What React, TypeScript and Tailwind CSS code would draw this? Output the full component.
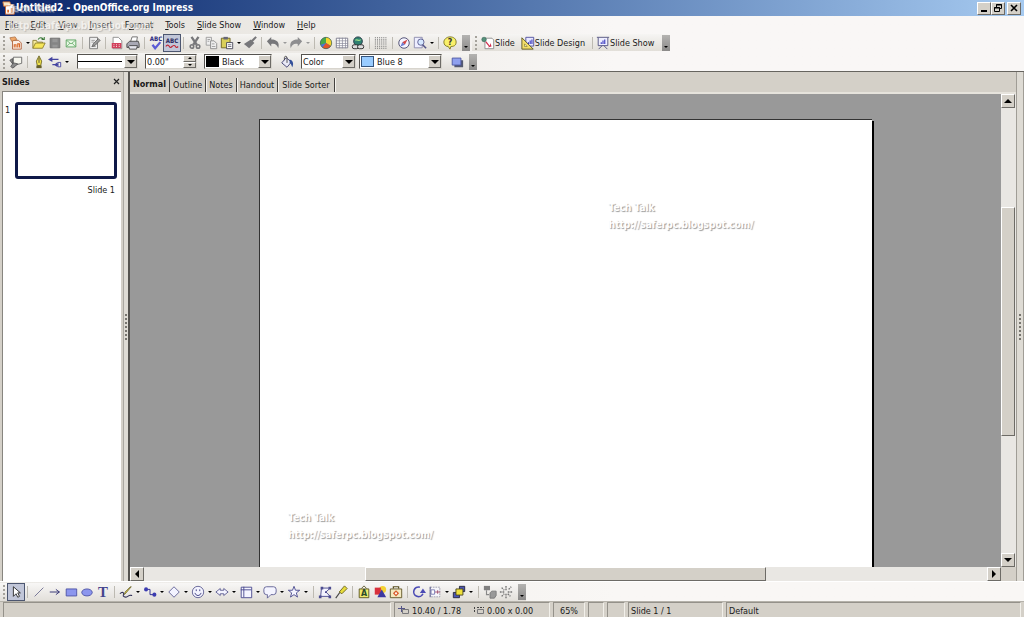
import { useState } from 'react';
import type { ReactNode } from 'react';

const NAVY = '#20208a';
const GRAY = '#77777a';

// 16x16 toolbar drawings
const icons: Record<string, ReactNode> = {
  newDoc: (
    <>
      <path d="M4 5h7l3 3v7H4z" fill="#fbeee4" stroke="#b0603a" />
      <path d="M1 2l6-1 2 3-6 2z" fill="#f0a868" stroke="#a8683c" strokeWidth=".8" />
      <path d="M6 13v-3h2v3M10 13V9h2v4" stroke="#d9692a" strokeWidth="1.300" fill="none" />
    </>
  ),
  open: (
    <>
      <path d="M1 14V5h4l1 2h6v2" fill="#f5eaa0" stroke="#8a7c2c" />
      <path d="M1 14l3-6h11l-3 6z" fill="#f6e65a" stroke="#8a7c2c" />
      <path d="M7 4c2-3 5-2 6 0m-2 0h3V1" stroke="#3c7a3a" fill="none" strokeWidth="1.200" />
    </>
  ),
  save: (
    <>
      <path d="M2.500 2.500h11v11h-11z" fill="#858585" stroke="#6d6d6d" />
      <path d="M5 3h6v4H5zM5 10h6v3H5z" fill="#979797" />
    </>
  ),
  mail: (
    <>
      <path d="M2.500 4.500h11v8h-11z" fill="#e8f7e4" stroke="#55a05a" />
      <path d="M3 5l5 4 5-4M3 12l4-4M13 12L9 8" stroke="#55a05a" fill="none" strokeWidth=".8" />
    </>
  ),
  edit: (
    <>
      <path d="M3 1.500h9v13H3z" fill="#eee" stroke="#777" />
      <path d="M5 5h4M5 7h3M5 12h5" stroke="#999" />
      <path d="M15 5l-6 6-3 1 1-3 6-6z" fill="#999" stroke="#555" strokeWidth=".8" />
    </>
  ),
  pdf: (
    <>
      <path d="M3.500 1.500h6l4 4v9h-10z" fill="#fff" stroke="#888" />
      <path d="M2 8h11v6H2z" fill="#d2405c" />
      <path d="M4 10h1M7 10h1M10 10h1M4 12h1M7 12h1M10 12h1" stroke="#fff" />
    </>
  ),
  print: (
    <>
      <path d="M5 7l2-6h6l-1 6" fill="#fff" stroke="#666" />
      <path d="M1 9l3-3h10l1 3v4H1z" fill="#a8a8b4" stroke="#444" />
      <path d="M3 12l1 3h8l1-4H4z" fill="#e4e4ec" stroke="#444" />
    </>
  ),
  spell: (
    <>
      <text x="8" y="6" fontSize="7" fontWeight="bold" textAnchor="middle" fill="#2b2b80">
        ABC
      </text>
      <path d="M4 10l3 4 6-7" stroke="#5b5bd6" strokeWidth="2.600" fill="none" />
    </>
  ),
  autoSpell: (
    <>
      <text x="8" y="8" fontSize="7" fontWeight="bold" textAnchor="middle" fill="#2b2b60">
        ABC
      </text>
      <path d="M1 12c1-2 3-2 4 0s2 1 3 0 3-2 4 0 2 1 3 0" stroke="#c02838" strokeWidth="1.300" fill="none" />
    </>
  ),
  cut: (
    <>
      <path d="M4 1l6 9M12 1L6 10" stroke={GRAY} strokeWidth="2.600" />
      <circle cx="4.500" cy="12" r="2" fill="none" stroke={GRAY} strokeWidth="1.800" />
      <circle cx="11.500" cy="12" r="2" fill="none" stroke={GRAY} strokeWidth="1.800" />
    </>
  ),
  copy: (
    <>
      <path d="M2.500 1.500h6v9h-6z" fill="#eee" stroke="#999" />
      <path d="M7.500 5.500h4l3 3v6h-7z" fill="#eee" stroke="#888" />
      <path d="M4 4h3M4 6h2M9 9h3M9 12h4" stroke="#999" />
    </>
  ),
  paste: (
    <>
      <path d="M1.500 2.500h10v11h-10z" fill="#d9cf5a" stroke="#6a6020" />
      <path d="M4 1h5v3H4z" fill="#667" />
      <path d="M7.500 7.500h7v7h-7z" fill="#fff" stroke="#445" />
      <path d="M9 10h4M9 12h4" stroke="#667" />
    </>
  ),
  brush: (
    <>
      <path d="M15 1l-5 5" stroke={GRAY} strokeWidth="2.400" />
      <path d="M9 4l4 4-6 6-6-5z" fill={GRAY} />
    </>
  ),
  undo: <path d="M1 6l5-5v3c6 0 10 3 8 10-1-4-4-6-8-5v3z" fill={GRAY} />,
  redo: <path d="M15 6l-5-5v3C4 4 0 7 2 14c1-4 4-6 8-5v3z" fill="#8e8e90" />,
  chart: (
    <>
      <circle cx="8" cy="8" r="6.500" fill="#4a76d8" />
      <path d="M8 8V1.500a6.500 6.500 0 0 1 5.600 9.800z" fill="#f5d52e" />
      <path d="M8 8l5.600 3.300A6.500 6.500 0 0 1 4 13z" fill="#e0562a" />
      <path d="M8 8V1.500a6.500 6.500 0 0 0-6 8.500z" fill="#47a84a" />
      <circle cx="8" cy="8" r="6.500" fill="none" stroke="#3a5a3a" strokeWidth=".7" />
    </>
  ),
  table: (
    <>
      <path d="M1.500 2.500h13v11h-13z" fill="#fff" stroke="#777788" />
      <path d="M1 5.500h14M1 8.500h14M1 11h14M5 2v12M8.500 2v12M12 2v12" stroke="#88889a" strokeWidth=".8" />
    </>
  ),
  link: (
    <>
      <circle cx="8" cy="6" r="5" fill="#2f8070" stroke="#234" />
      <path d="M5 5c2-2 4 2 6-1" stroke="#9be08a" fill="none" strokeWidth="1.400" />
      <rect x="1.500" y="10" width="7" height="4.500" rx="2" fill="#ddd" stroke="#222" />
      <rect x="7.500" y="10" width="7" height="4.500" rx="2" fill="#ddd" stroke="#222" />
    </>
  ),
  grid: (
    <path
      d="M1 2h14M1 4.400h14M1 6.800h14M1 9.200h14M1 11.600h14M1 14h14"
      stroke="#777"
      strokeWidth="1.200"
      strokeDasharray="1.200 1.200"
    />
  ),
  compass: (
    <>
      <circle cx="8" cy="8" r="6" fill="#f4f4ff" stroke="#44446a" />
      <path d="M12 4L9 10 6 7z" fill="#d04848" />
      <path d="M4 12l2-5 3 3z" fill="#6a7ad0" />
    </>
  ),
  zoom: (
    <>
      <path d="M1.500 1.500h9v12h-9z" fill="#eef" stroke="#8888aa" />
      <circle cx="9" cy="7" r="3.600" fill="#d6e8ff" stroke="#555588" />
      <path d="M11 10l4 4" stroke="#555588" strokeWidth="1.800" />
    </>
  ),
  help: (
    <>
      <path d="M8 1c4 0 7 2 7 6s-3 5-6 5l-1 3-2-3c-3 0-5-2-5-5s3-6 7-6z" fill="#f9f06a" stroke="#77711a" />
      <text x="8" y="10.500" fontSize="10" fontWeight="bold" textAnchor="middle" fill="#333">
        ?
      </text>
    </>
  ),
  slide: (
    <>
      <path d="M4.500 2.500h8l2 2v10h-10z" fill="#fff" stroke="#888" />
      <path d="M6 6l4 5 1-3 1 4-4 1 1-1-4-5z" fill="#d03050" />
      <circle cx="3.500" cy="4" r="2.600" fill="#56907a" stroke="#2b5a4a" strokeWidth=".6" />
    </>
  ),
  design: (
    <>
      <path d="M5.500 1.500h9v10h-9z" fill="#e8e8ff" stroke="#4a4a9a" />
      <path d="M8.500 9V7M10.500 9V5M12.500 9V4" stroke="#3c3cc0" strokeWidth="1.300" />
      <path d="M1 2l13 13H1z" fill="#f3df6a" stroke="#555020" />
      <path d="M4 9v3h3z" fill="#fff" stroke="#7a7020" strokeWidth=".7" />
    </>
  ),
  show: (
    <>
      <path d="M1 1.500h14M2.500 2v9h11V2" fill="#eeeeff" stroke="#4a4a7a" />
      <path d="M6 9V7M8 9V5M10 9V4" stroke="#3c3cc0" strokeWidth="1.300" />
      <path d="M7 11l-4 4M9 11l4 4" stroke="#4a4a7a" />
    </>
  ),
  styles: (
    <>
      <path d="M5 2.500h9.500v7L9 11H5z" fill="#f6f6ee" stroke="#666" />
      <path d="M1 6l3-2v6zM2 13l3-4 5 1-3 3-3 2z" fill="#8a8a8a" stroke="#444" strokeWidth=".8" />
    </>
  ),
  pen: (
    <>
      <path d="M8 1l3 6-1 5H6L5 7z" fill="#f1e34b" stroke="#6a6420" />
      <path d="M5 12h6v3H5z" fill="#66602a" />
      <path d="M8 3v6" stroke="#444" />
    </>
  ),
  arrowStyle: (
    <>
      <path d="M3 5h9M5 11h7" stroke="#4444a0" strokeWidth="1.400" />
      <path d="M0 5l5-3v6zM11 8l-4 3 4 3z" fill="#4444a0" />
      <path d="M11.500 8.500h3v5h-3z" fill="#eee" stroke="#4444a0" />
    </>
  ),
  bucket: (
    <>
      <path d="M7 3l6 5-5 6-6-5z" fill="#e9e9f6" stroke="#3c3c6e" />
      <path d="M8 9V3c0-2-3-2-3 0v3" stroke="#444" fill="none" />
      <path d="M11 5c4 1 5 5 3 9-1-2-1-4-3-5z" fill="#34509a" />
    </>
  ),
  shadow: (
    <>
      <path d="M5 6h10v8H5z" fill="#555a70" />
      <path d="M2.500 3.500h10v8h-10z" fill="#8fa0ee" stroke="#4a55a0" />
    </>
  ),
  select: <path d="M5 2v11l3-3 2 4 2-1-2-4h3z" fill="#fff" stroke="#222" />,
  line: <path d="M3 13L13 3" stroke="#6a6a8e" />,
  arrow: <path d="M2 8h11M9 5l4 3-4 3" stroke="#24246a" fill="none" />,
  rect: <path d="M2.500 4.500h12v8h-12z" fill="#8c96ee" stroke="#4a50a4" />,
  ellipse: <ellipse cx="8" cy="8.500" rx="6" ry="4" fill="#8c96ee" stroke="#4a50a4" />,
  text: (
    <text
      x="8"
      y="14"
      fontSize="17"
      fontWeight="bold"
      textAnchor="middle"
      fill="#44448e"
      fontFamily="'Liberation Serif', serif"
    >
      T
    </text>
  ),
  curve: (
    <>
      <path d="M1 10c3-3 5-1 4 1s2 4 5 2 3-1 5-1" stroke="#33335a" strokeWidth="1.200" fill="none" />
      <path d="M14 2l-6 7-2 2 1-3 6-6z" fill="#ecd84a" stroke="#55501f" strokeWidth=".8" />
    </>
  ),
  connector: (
    <>
      <path d="M4 5h4v6h5" stroke={NAVY} fill="none" />
      <circle cx="3.500" cy="5" r="2.300" fill="#3c3cb0" />
      <circle cx="13" cy="11" r="2.300" fill="#3c3cb0" />
    </>
  ),
  diamond: <path d="M8 2l6 6-6 6-6-6z" fill="#f3f3ff" stroke="#5a5a90" />,
  smile: (
    <>
      <circle cx="8" cy="8" r="6.500" fill="#f4f4ff" stroke="#5a5a90" />
      <path d="M6 5v2M10 5v2M4.500 9c1 4 6 4 7 0" stroke="#33337a" fill="none" />
    </>
  ),
  blockArrow: <path d="M1 8l5-4v2h4V4l5 4-5 4v-2H6v2z" fill="#f3f3ff" stroke="#5a5a90" />,
  flow: (
    <>
      <path d="M2.500 2.500h12v12h-12z" fill="#f4f4ff" stroke="#44448a" />
      <path d="M5.500 2v12M2 5.500h12" stroke="#44448a" />
    </>
  ),
  callout: <path d="M4 2h8q3 0 3 3v3q0 3-3 3H9l-4 4v-4H4q-3 0-3-3V5q0-3 3-3z" fill="#f4f4ff" stroke="#5a5a90" />,
  star: <path d="M8 1.500l1.700 4.500h4.800l-3.800 3 1.300 4.800L8 11l-4 2.800L5.300 9 1.500 6h4.800z" fill="#f4f4ff" stroke="#44448a" />,
  points: (
    <>
      <path d="M4 3.500h10L9 8l5 5H3z" fill="#f4f4ff" stroke="#44448a" />
      <path d="M3 2h3v3H3zM12 2h3v3h-3zM8 7h2v2H8zM12 12h3v3h-3zM1 12h3v3H1z" fill="#4c4c90" />
    </>
  ),
  glue: (
    <>
      <path d="M2 15l5-7" stroke="#444" strokeWidth="1.300" />
      <path d="M6 8l6-7 3 3-6 6z" fill="#e8dc3c" stroke="#66601a" />
    </>
  ),
  fontwork: (
    <>
      <path d="M2.500 4.500h11v10h-11z" fill="#f1ea6a" stroke="#555020" />
      <path d="M5 4l3-3 3 3" stroke="#555020" fill="none" />
      <text x="8" y="13" fontSize="10" fontWeight="bold" textAnchor="middle" fill="#2b4a2b">
        A
      </text>
    </>
  ),
  shapes: (
    <>
      <circle cx="11" cy="5" r="4" fill="#f4d232" />
      <path d="M2 3h7v8H2z" fill="#d8303c" />
      <path d="M10 5l5 9H5z" fill="#3c38a0" />
    </>
  ),
  gallery: (
    <>
      <path d="M1.500 4.500h13v10h-13z" fill="#f3e9c0" stroke="#5a5020" />
      <path d="M5 4V2h6v2" stroke="#5a5020" fill="none" strokeWidth="1.400" />
      <path d="M8 6l3.500 3.500L8 13 4.500 9.500z" fill="#d85a2a" />
      <path d="M8 8l1.500 1.500L8 11 6.500 9.500z" fill="#fff" />
    </>
  ),
  rotate: (
    <>
      <path d="M9 2.500A5.500 5.500 0 1 0 12.500 10" stroke="#4a4ab4" strokeWidth="1.800" fill="none" />
      <path d="M9 9h7l-3.500-5z" fill="#4a4ab4" />
    </>
  ),
  align: (
    <>
      <path d="M2.500 2.500h11v11h-11z" fill="#f6f6fa" stroke="#9999aa" strokeDasharray="2 1" />
      <path d="M2.500 2v12" stroke="#55558a" />
      <path d="M3.500 5.500h4v5h-4z" fill="#fff" stroke="#7777b0" />
      <path d="M8 8h6M11 6v4" stroke="#a04a6a" />
    </>
  ),
  arrange: (
    <>
      <path d="M1.500 8.500h7v6h-7zM8.500 1.500h6v6h-6z" fill="#4a55b4" stroke="#223" />
      <path d="M4.500 4.500h8v7h-8z" fill="#efe13c" stroke="#444020" />
    </>
  ),
  extrude: (
    <>
      <path d="M1 1h7v5H1z" fill="#808080" />
      <path d="M4 6v5h3" stroke="#888" fill="none" strokeWidth="1.300" />
      <path d="M8 9l2-2h5v5l-2 3H8z" fill="#999" stroke="#777" />
    </>
  ),
  anim: (
    <path
      d="M8 1v5M8 10v5M1 8h5M10 8h5M3 3l3 3M10 10l3 3M3 13l3-3M11 5l3-3"
      stroke="#777"
      strokeDasharray="2 1"
      strokeWidth="1.600"
    />
  ),
};

function Icon({ name }: { name: string }) {
  return (
    <svg viewBox="0 0 16 16" className="block h-[14px] w-[14px]" aria-hidden="true">
      {icons[name]}
    </svg>
  );
}

function Tool({ name, label, on = false }: { name: string; label: string; on?: boolean }) {
  return (
    <button
      type="button"
      aria-label={label}
      aria-pressed={on}
      className={`flex h-4 w-4 shrink-0 items-center justify-center ${
        on ? 'bg-[#c1c6d8] outline outline-1 outline-[#4c5670]' : ''
      }`}
    >
      <Icon name={name} />
    </button>
  );
}

const Triangle = ({ className = 'fill-black' }: { className?: string }) => (
  <svg viewBox="0 0 8 4" className={`block h-1 w-2 ${className}`} aria-hidden="true">
    <path d="M0 0h8L4 4z" />
  </svg>
);

const Drop = ({ label, wide = false, dim = false }: { label: string; wide?: boolean; dim?: boolean }) => (
  <button
    type="button"
    aria-label={label}
    className={`flex h-4 shrink-0 items-center justify-center ${wide ? 'w-2' : 'w-[7px]'}`}
  >
    <svg viewBox="0 0 4 2" className={`h-[2px] w-1 ${dim ? 'fill-[#999]' : 'fill-black'}`} aria-hidden="true">
      <path d="M0 0h4L2 2z" />
    </svg>
  </button>
);

const Sep = () => (
  <span className="flex w-[7px] shrink-0 justify-center">
    <span className="h-3 w-px bg-[#bdbab2]" />
  </span>
);

const Grip = () => <span className="mx-[3px] h-[14px] w-0 shrink-0 border-l-2 border-dotted border-[#a5a29b]" />;

const More = ({ label }: { label: string }) => (
  <button
    type="button"
    aria-label={label}
    className="flex h-4 w-2 shrink-0 items-end justify-center bg-linear-to-b from-[#b4b3b1] to-[#8b8a89] pb-[3px]"
  >
    <svg viewBox="0 0 4 2" className="h-[2px] w-1" aria-hidden="true">
      <path d="M0 0h4L2 2z" />
    </svg>
  </button>
);

type ComboProps = {
  label: string;
  options: string[];
  className: string;
  children?: ReactNode;
};

function Combo({ label, options, className, children }: ComboProps) {
  return (
    <label
      className={`flex h-[15px] shrink-0 items-center border border-[#d8d5ce] border-t-[#55534f] border-l-[#55534f] bg-white ${className}`}
    >
      {children}
      <select aria-label={label} className="h-full min-w-0 flex-1 appearance-none bg-transparent pl-px leading-3 outline-none">
        {options.map((option) => (
          <option key={option}>{option}</option>
        ))}
      </select>
      <span className="flex h-[13px] w-[13px] shrink-0 items-center justify-center border border-[#6d6b66] border-t-white border-l-white bg-[#d4d0c8]">
        <Triangle />
      </span>
    </label>
  );
}

const menus = [
  ['', 'F', 'ile'],
  ['', 'E', 'dit'],
  ['', 'V', 'iew'],
  ['', 'I', 'nsert'],
  ['F', 'o', 'rmat'],
  ['', 'T', 'ools'],
  ['', 'S', 'lide Show'],
  ['', 'W', 'indow'],
  ['', 'H', 'elp'],
];

const views = ['Normal', 'Outline', 'Notes', 'Handout', 'Slide Sorter'];

const shapeTools = [
  ['curve', 'Curve'],
  ['connector', 'Connector'],
  ['diamond', 'Basic Shapes'],
  ['smile', 'Symbol Shapes'],
  ['blockArrow', 'Block Arrows'],
  ['flow', 'Flowcharts'],
  ['callout', 'Callouts'],
  ['star', 'Stars'],
];

const raised = 'border border-[#6d6b66] border-t-white border-l-white bg-[#d4d0c8]';
const toolRow = 'flex h-[17px] items-center rounded-r-sm bg-linear-to-b from-[#f6f5f3] to-[#e2dfd9]';

function TitleBar() {
  const control = `flex h-[13px] w-[14px] items-center justify-center ${raised}`;
  return (
    <div className="flex h-4 shrink-0 items-center bg-linear-to-r from-[#0a246a] to-[#a6caf0] pr-[3px] pl-[2px] text-white">
      <svg viewBox="0 0 16 16" className="h-[14px] w-[14px]" aria-hidden="true">
        <path d="M4 4h8l2 2v9H4z" fill="#fff" stroke="#c8642c" />
        <path d="M1 1h8l1 4-8 1z" fill="#f4e6c8" stroke="#d87a3a" />
        <path d="M6 13v-3h2v3M10 13V8h2v5" fill="#e0702c" />
      </svg>
      <h1 className="flex-1 truncate text-[10px] leading-4 font-bold">Untitled2 - OpenOffice.org Impress</h1>
      <button type="button" aria-label="Minimize" className={control}>
        <svg viewBox="0 0 10 8" className="h-2 w-[10px]" aria-hidden="true">
          <path d="M2 6h6v2H2z" />
        </svg>
      </button>
      <button type="button" aria-label="Restore" className={`${control} mr-[2px]`}>
        <svg viewBox="0 0 10 8" className="h-2 w-[10px]" fill="none" stroke="#000" aria-hidden="true">
          <path d="M3.500 3V.5h5v4H7M3 1h6M1.500 3.500h5v4h-5zM1 4h6" />
        </svg>
      </button>
      <button type="button" aria-label="Close" className={control}>
        <svg viewBox="0 0 10 8" className="h-2 w-[10px]" stroke="#000" strokeWidth="1.600" aria-hidden="true">
          <path d="M2 1l6 6M8 1L2 7" />
        </svg>
      </button>
    </div>
  );
}

function StandardBar() {
  return (
    <div className="flex h-[19px] items-center">
      <div className={toolRow}>
        <Grip />
        <Tool name="newDoc" label="New" />
        <Drop label="New options" />
        <Tool name="open" label="Open" />
        <Tool name="save" label="Save" />
        <Tool name="mail" label="E-mail" />
        <Sep />
        <Tool name="edit" label="Edit File" />
        <Sep />
        <Tool name="pdf" label="Export as PDF" />
        <Tool name="print" label="Print" />
        <Sep />
        <Tool name="spell" label="Spellcheck" />
        <Tool name="autoSpell" label="AutoSpellcheck" on />
        <Sep />
        <Tool name="cut" label="Cut" />
        <Tool name="copy" label="Copy" />
        <Tool name="paste" label="Paste" />
        <Drop label="Paste options" />
        <Tool name="brush" label="Format Paintbrush" />
        <Sep />
        <Tool name="undo" label="Undo" />
        <Drop label="Undo list" dim />
        <Tool name="redo" label="Redo" />
        <Drop label="Redo list" dim />
        <Sep />
        <Tool name="chart" label="Chart" />
        <Tool name="table" label="Table" />
        <Tool name="link" label="Hyperlink" />
        <Sep />
        <Tool name="grid" label="Display Grid" />
        <Sep />
        <Tool name="compass" label="Navigator" />
        <Tool name="zoom" label="Zoom" />
        <Drop label="Zoom options" />
        <Sep />
        <Tool name="help" label="Help" />
        <span className="w-1" />
        <More label="More standard tools" />
      </div>
      <div className={`${toolRow} ml-[2px]`}>
        <Grip />
        <button type="button" className="ml-px flex items-center">
          <Icon name="slide" />
          Slide
        </button>
        <button type="button" className="ml-[6px] flex items-center">
          <Icon name="design" />
          Slide Design
        </button>
        <span className="w-1" />
        <Sep />
        <button type="button" className="flex items-center">
          <Icon name="show" />
          Slide Show
        </button>
        <span className="w-2" />
        <More label="More presentation tools" />
      </div>
    </div>
  );
}

function LineBar() {
  return (
    <div className="flex h-[19px] items-center">
      <div className={toolRow}>
        <Grip />
        <Tool name="styles" label="Styles and Formatting" />
        <Sep />
        <Tool name="pen" label="Line" />
        <Tool name="arrowStyle" label="Arrow Style" />
        <Drop label="Arrow Style options" />
        <Combo label="Line Style" options={['']} className="ml-[7px] w-[61px]">
          <span className="h-px w-11 bg-black" />
        </Combo>
        <div className="ml-[7px] flex h-[15px] w-[52px] items-center border border-[#d8d5ce] border-t-[#55534f] border-l-[#55534f] bg-white">
          <input aria-label="Line Width" defaultValue={'0.00"'} className="min-w-0 flex-1 pl-px leading-3 outline-none" />
          <span className="flex h-[13px] w-[13px] flex-col">
            <button type="button" aria-label="Increase line width" className={`flex flex-1 items-center justify-center ${raised}`}>
              <svg viewBox="0 0 4 2" className="h-[2px] w-1" aria-hidden="true">
                <path d="M0 2h4L2 0z" />
              </svg>
            </button>
            <button type="button" aria-label="Decrease line width" className={`flex flex-1 items-center justify-center ${raised}`}>
              <svg viewBox="0 0 4 2" className="h-[2px] w-1" aria-hidden="true">
                <path d="M0 0h4L2 2z" />
              </svg>
            </button>
          </span>
        </div>
        <Combo label="Line Color" options={['Black', 'Blue', 'Green']} className="ml-[7px] w-[68px]">
          <span className="mr-[2px] ml-px h-[11px] w-[13px] bg-black" />
        </Combo>
        <span className="w-[7px]" />
        <Tool name="bucket" label="Area" />
        <Combo label="Area Style" options={['Color', 'Gradient', 'Hatching', 'Bitmap']} className="ml-[6px] w-[55px]" />
        <Combo label="Area Fill" options={['Blue 8', 'Blue 7']} className="ml-[3px] w-[83px]">
          <span className="mr-[2px] ml-px h-[11px] w-[13px] border border-[#35557e] bg-[#99ccff]" />
        </Combo>
        <span className="w-[7px]" />
        <Tool name="shadow" label="Shadow" />
        <span className="w-1" />
        <More label="More line and filling tools" />
      </div>
    </div>
  );
}

function SlidesPanel() {
  return (
    <aside className="flex w-[124px] shrink-0 flex-col border-r border-[#aaa7a0] px-[2px]">
      <div className="flex h-[19px] shrink-0 items-center justify-between">
        <h2 className="font-bold">Slides</h2>
        <button type="button" aria-label="Close Slides" className="p-px">
          <svg viewBox="0 0 7 7" className="h-[7px] w-[7px]" stroke="#222" strokeWidth="1.200" aria-hidden="true">
            <path d="M1 1l5 5M6 1L1 6" />
          </svg>
        </button>
      </div>
      <ol className="flex-1 border-t border-l border-[#87857f] bg-white pt-[10px]">
        <li className="flex items-start pl-[2px]">
          <span className="w-[10px] pt-[2px]">1</span>
          <figure className="w-[102px]">
            <div className="h-[77px] rounded-[3px] border-3 border-[#0e1848] bg-white" />
            <figcaption className="pt-[5px] pr-[2px] text-right leading-3">Slide 1</figcaption>
          </figure>
        </li>
      </ol>
    </aside>
  );
}

function Watermark({ className }: { className: string }) {
  return (
    <p
      className={`pointer-events-none absolute text-[10px] leading-[17px] font-bold whitespace-nowrap text-white [text-shadow:1px_1px_1px_#999] ${className}`}
    >
      Tech Talk
      <br />
      http://saferpc.blogspot.com/
    </p>
  );
}

const scrollButton = `flex h-[14px] w-[14px] shrink-0 items-center justify-center ${raised}`;

function Splitter() {
  return <span className="h-[26px] w-0 border-l-2 border-dotted border-[#77756f]" />;
}

function Workspace() {
  const [view, setView] = useState('Normal');

  return (
    <main className="flex min-w-0 flex-1 flex-col border-l-2 border-[#55534f]">
      <nav className="flex h-[22px] shrink-0 items-end border-b-2 border-[#e6e3dc]">
        {views.map((name) => (
          <button
            key={name}
            type="button"
            onClick={() => setView(name)}
            className={`border-r border-[#44423f] ${
              name === view ? 'h-4 px-[3px] font-bold' : 'h-[14px] px-[3px] shadow-[1px_0_0_#f5f3ee] last:px-1'
            }`}
          >
            {name}
          </button>
        ))}
      </nav>
      <div className="flex min-h-0 flex-1">
        <div className="flex min-w-0 flex-1 flex-col bg-[#999] pt-[25px]">
          <div className="relative mx-auto w-[70.3%] flex-1 border-t border-l border-[#333] bg-white shadow-[2px_2px_0_#000]">
            <Watermark className="top-[79px] left-[57%]" />
            <Watermark className="bottom-6 left-7" />
          </div>
        </div>
        <div className="flex w-[15px] shrink-0 flex-col bg-[#e9e7e3]">
          <button type="button" aria-label="Scroll up" className={scrollButton}>
            <Triangle className="rotate-180" />
          </button>
          <div className="flex-[100]" />
          <div className={`w-[14px] flex-[229] ${raised}`} />
          <div className="flex-[118]" />
          <button type="button" aria-label="Scroll down" className={scrollButton}>
            <Triangle />
          </button>
        </div>
      </div>
      <div className="z-10 flex h-[14px] shrink-0 bg-[#d4d0c8] pr-[15px]">
        <div className="flex flex-1 bg-[#e9e7e3]">
          <button type="button" aria-label="Scroll left" className={scrollButton}>
            <svg viewBox="0 0 4 8" className="h-2 w-1" aria-hidden="true">
              <path d="M4 0v8L0 4z" />
            </svg>
          </button>
          <div className="flex-[222]" />
          <div className={`flex-[400] ${raised}`} />
          <div className="flex-[222]" />
          <button type="button" aria-label="Scroll right" className={scrollButton}>
            <svg viewBox="0 0 4 8" className="h-2 w-1" aria-hidden="true">
              <path d="M0 0v8l4-4z" />
            </svg>
          </button>
        </div>
      </div>
    </main>
  );
}

function DrawingBar() {
  return (
    <div className="flex h-5 shrink-0 items-center border-t border-white bg-linear-to-r from-[#ebe9e5] to-[#f9f7f5] to-60%">
      <div className="flex h-[18px] items-center bg-linear-to-b from-[#f8f7f6] to-[#e2dfda]">
        <Grip />
        <Tool name="select" label="Select" on />
        <Sep />
        <Tool name="line" label="Line" />
        <Tool name="arrow" label="Line Ends with Arrow" />
        <Tool name="rect" label="Rectangle" />
        <Tool name="ellipse" label="Ellipse" />
        <Tool name="text" label="Text" />
        <Sep />
        {shapeTools.map(([name, label]) => (
          <span key={name} className="flex">
            <Tool name={name} label={label} />
            <Drop label={`${label} options`} wide />
          </span>
        ))}
        <Sep />
        <Tool name="points" label="Points" />
        <Tool name="glue" label="Glue Points" />
        <Sep />
        <Tool name="fontwork" label="Fontwork Gallery" />
        <Tool name="shapes" label="From File" />
        <Tool name="gallery" label="Gallery" />
        <Sep />
        <Tool name="rotate" label="Rotate" />
        <Tool name="align" label="Alignment" />
        <Drop label="Alignment options" wide />
        <Tool name="arrange" label="Arrange" />
        <Drop label="Arrange options" wide />
        <Sep />
        <Tool name="extrude" label="Extrusion" />
        <Tool name="anim" label="Interaction" />
        <span className="w-1" />
        <More label="More drawing tools" />
      </div>
    </div>
  );
}

function StatusBar() {
  const cell = 'flex h-[15px] items-center border-t border-l border-[#94918a] border-r border-r-[#f2f0ea] pt-px';
  return (
    <footer className="flex shrink-0 gap-[3px] border-t border-[#b5b2aa] px-[3px]">
      <div className={`${cell} flex-1`} />
      <div className={`${cell} w-[156px] pl-[3px]`}>
        <svg viewBox="0 0 12 10" className="mr-[2px] h-[10px] w-3" fill="none" stroke="#555588" aria-hidden="true">
          <path d="M3.500 0v6M0 2.500h7" />
          <path d="M4.500 3.500h6v4h-6z" stroke="#77777a" />
        </svg>
        10.40 / 1.78
        <svg viewBox="0 0 12 10" className="mr-[2px] ml-3 h-[10px] w-3" fill="none" stroke="#444" aria-hidden="true">
          <path d="M1.500 1v6" strokeDasharray="2 1" />
          <path d="M4 1.500h7" strokeDasharray="2 1" />
          <path d="M4.500 3.500h6v4h-6z" stroke="#77777a" />
        </svg>
        0.00 x 0.00
      </div>
      <div className={`${cell} w-8 justify-center`}>65%</div>
      <div className={`${cell} w-4`} />
      <div className={`${cell} w-[18px]`} />
      <div className={`${cell} w-[95px] pl-[2px]`}>Slide 1 / 1</div>
      <div className={`${cell} w-[295px] pl-[2px]`}>Default</div>
    </footer>
  );
}

export default function App() {
  return (
    <div className="relative flex h-screen flex-col overflow-hidden bg-[#d4d0c8] font-['DejaVu_Sans_Condensed','DejaVu_Sans',sans-serif] text-[9px] leading-3 text-[#1a1a1a]">
      <TitleBar />
      <header className="shrink-0 border-b border-[#66645f] bg-linear-to-r from-[#e2dfd8] to-[#f9f7f6] to-60%">
        <nav className="flex h-[17px] items-center gap-3 pl-[5px]">
          {menus.map(([before, key, after]) => (
            <button key={before + key + after} type="button">
              {before}
              <u>{key}</u>
              {after}
            </button>
          ))}
        </nav>
        <StandardBar />
        <LineBar />
      </header>
      <div className="flex min-h-0 flex-1">
        <SlidesPanel />
        <div className="flex w-1 shrink-0 items-center justify-center bg-[#dedbd4]">
          <Splitter />
        </div>
        <Workspace />
        <div className="flex w-2 shrink-0 items-center justify-center border-r border-l border-[#a09d96] bg-[#dedbd4]">
          <Splitter />
        </div>
      </div>
      <DrawingBar />
      <StatusBar />
      <Watermark className="top-0 left-2 opacity-50" />
    </div>
  );
}
